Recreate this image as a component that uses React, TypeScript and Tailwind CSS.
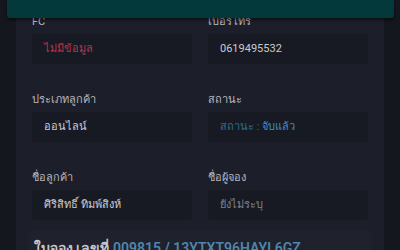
import React from 'react';

type Field = {
  label: string;
  value: React.ReactNode;
  valueClass: string;
};

const fields: Field[] = [
  { label: 'FC', value: 'ไม่มีข้อมูล', valueClass: 'text-[#b8344a]' },
  { label: 'เบอร์โทร', value: '0619495532', valueClass: 'text-[#c9cbd1]' },
  { label: 'ประเภทลูกค้า', value: 'ออนไลน์', valueClass: 'text-[#c9cbd1]' },
  {
    label: 'สถานะ',
    value: (
      <>
        <span className="text-[#2a6f8c]">สถานะ : </span>
        <span className="text-[#3b8fc4]">จับแล้ว</span>
      </>
    ),
    valueClass: '',
  },
  { label: 'ชื่อลูกค้า', value: 'ศิริสิทธิ์ ทิมพ์สิงห์', valueClass: 'text-[#c9cbd1]' },
  { label: 'ชื่อผู้จอง', value: 'ยังไม่ระบุ', valueClass: 'text-[#7d818c]' },
];

export default function App() {
  return (
    <div
      className="relative w-[400px] h-[250px] overflow-hidden bg-[#15171f]"
      style={{ fontFamily: 'Roboto, "Noto Sans", "DejaVu Sans", sans-serif' }}
    >
      {/* แถบหัวด้านบน */}
      <div className="absolute left-[7px] right-[6px] top-0 h-[18px] bg-[#04393b] rounded-b-[3px] shadow-[0_2px_3px_rgba(0,0,0,0.5)] z-10" />

      <div className="mx-4 h-full bg-[#1c1e29]">
        <div className="px-4 pt-[14px] grid grid-cols-2 gap-x-4 gap-y-[28px]">
          {fields.map((f) => (
            <div key={f.label} className="flex flex-col gap-1">
              <div className="h-4 leading-4 text-[11px] text-[#b4b7bf]">{f.label}</div>
              <div className="h-[30px] bg-[#181a23] rounded-[2px] px-3 flex items-center text-[11px]">
                <span className={f.valueClass}>{f.value}</span>
              </div>
            </div>
          ))}
        </div>

        {/* ส่วนใบจอง */}
        <div className="mx-3 mt-[10px] bg-[#1f212c] rounded-t-[3px] px-[6px] pt-[8px]">
          <div className="text-[14px] font-semibold leading-5">
            <span className="text-[#c4c6cc]">ใบจอง เลขที่ </span>
            <span className="text-[#4f86ad]">009815 / 13YTXT96HAYL6GZ</span>
          </div>
        </div>
      </div>
    </div>
  );
}
